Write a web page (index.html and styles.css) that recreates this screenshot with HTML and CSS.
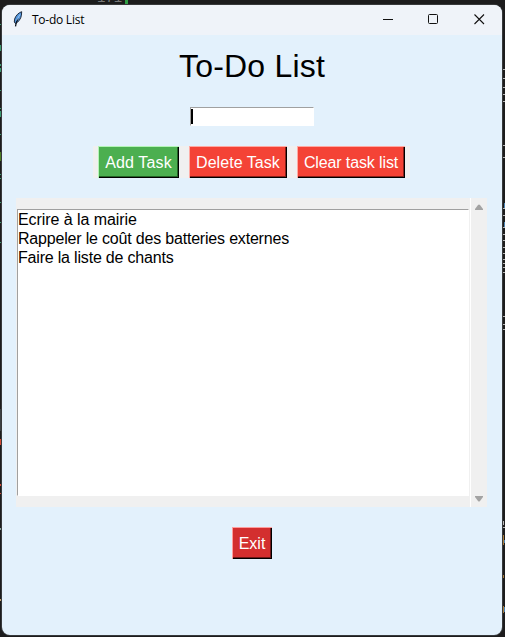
FILE: index.html
```html
<!DOCTYPE html>
<html lang="en">
<head>
<meta charset="utf-8">
<title>To-do List</title>
<link rel="stylesheet" href="styles.css">
</head>
<body>
<div class="editor-top"><span class="line-number">171</span><i class="change-bar"></i></div>
<svg class="editor-edges" width="505" height="637" shape-rendering="crispEdges" aria-hidden="true">
  <g fill="#3b9b72"><path d="M0 24h2v1H0zM0 45h1v6H0zM0 64h2v2H0zM0 68h2v4H0zM0 90h2v1H0zM0 108h2v1H0zM0 111h1v6H0zM0 134h2v1H0zM0 174h2v1H0zM0 178h2v1H0zM0 202h2v1H0zM0 222h2v1H0zM0 242h2v1H0z"/></g>
  <path fill="#4c7d24" d="M0 152h2v9H0z"/>
  <path fill="#3c4144" d="M0 409h2v22H0z"/>
  <path fill="#d64b35" d="M0 439h2v6H0zM0 484h2v2H0zM0 493h2v1H0z"/>
  <path fill="#8aa39c" d="M0 528h2v2H0z"/>
  <path fill="#c5a574" d="M0 599h2v2H0z"/>
  <g fill="#b8b8b8"><path d="M503 69h2v1h-2zM503 78h2v1h-2zM503 87h2v1h-2zM503 94h2v1h-2zM503 101h2v1h-2zM503 145h2v1h-2zM503 157h2v1h-2zM503 208h2v1h-2zM503 215h2v1h-2zM503 227h2v1h-2zM503 234h2v1h-2zM503 240h2v1h-2zM503 247h2v1h-2zM503 253h2v1h-2zM503 259h2v1h-2zM503 263h2v1h-2zM503 267h2v1h-2zM503 272h2v1h-2zM503 316h2v1h-2zM503 324h2v1h-2zM503 329h2v1h-2zM503 521h1v4h-1zM503 527h2v1h-2z"/></g>
  <path fill="#4c86b5" d="M504 203h1v5h-1zM504 222h1v5h-1zM504 540h1v3h-1zM504 607h1v5h-1z"/>
  <path fill="#a77b3a" d="M503 535h1v10h-1zM503 575h1v3h-1zM503 606h1v7h-1z"/>
</svg>
<main class="window">
  <header class="titlebar">
    <svg class="feather" width="10" height="16" viewBox="0 0 10 16" aria-hidden="true">
      <path d="M8.7.7C6 1.5 2.6 4.4 1.6 8.1L1.3 11l1.3 1.7C5.4 11 8 7.7 8.4 4.3z" fill="#4f91d9" stroke="#111b2b" stroke-width=".9"/>
      <path d="M5 7.5C3.7 10 3 11.500 2.500 15.4" fill="none" stroke="#0b1018" stroke-width="1.3"/>
      <path d="M7 3.4 3.6 9.400" stroke="#a7d1f6" stroke-width=".8"/>
    </svg>
    <span class="caption">To-do List</span>
    <svg class="controls" width="102" height="12" viewBox="0 0 102 12" fill="none" stroke="#111" aria-hidden="true">
      <path d="M0 6.5h10"/>
      <rect x="45.5" y="1.5" width="9" height="9" rx="1"/>
      <path d="m91.5 1.5 9.5 9.5m0-9.5-9.5 9.5" stroke-width="1.1"/>
    </svg>
  </header>
  <h1>To-Do List</h1>
  <div class="entry"><i class="caret"></i></div>
  <div class="actions">
    <button class="add">Add Task</button>
    <button class="delete">Delete Task</button>
    <button class="clear">Clear task list</button>
  </div>
  <section class="list-frame">
    <ul>
      <li>Ecrire à la mairie</li>
      <li>Rappeler le coût des batteries externes</li>
      <li>Faire la liste de chants</li>
    </ul>
    <div class="scrollbar">
      <svg width="8" height="6" viewBox="0 0 8 6"><path d="M0 6V5l3-4q1-1 2 0l3 4v1z" fill="#a3a3a3"/></svg>
      <svg width="8" height="6" viewBox="0 0 8 6"><path d="M0 0v1l3 4q1 1 2 0l3-4V0z" fill="#a3a3a3"/></svg>
    </div>
  </section>
  <button class="exit">Exit</button>
</main>
</body>
</html>
```
FILE: styles.css
```css
* { box-sizing: border-box; }
body {
  margin: 0;
  width: 505px;
  height: 637px;
  overflow: hidden;
  background: #1c1c1d;
  font: 16px "Liberation Sans", Arial, sans-serif;
  color: #000;
}
.editor-edges { position: absolute; left: 0; top: 0; }
.editor-top {
  display: flex;
  height: 5px;
  overflow: hidden;
  padding-left: 97px;
}
.line-number {
  width: 28px;
  margin-top: -10px;
  font: 14px/16px "Liberation Mono", monospace;
  color: #777;
}
.change-bar { width: 3px; height: 5px; background: #2f9e44; }
.window {
  position: relative;
  display: flex;
  flex-direction: column;
  align-items: center;
  width: 500px;
  height: 630px;
  margin-left: 2px;
  border-radius: 8px;
  overflow: hidden;
  background: #e3f1fc;
  box-shadow: 0 0 0 1px #37393b;
}
.titlebar {
  display: flex;
  align-items: center;
  width: 100%;
  height: 30px;
  flex: none;
  padding: 0 17px 0 11px;
  background: #eff3f9;
}
.feather { margin-top: -2px; }
.caption {
  margin-left: 9px;
  font: 12px/16px "Open Sans", sans-serif;
  letter-spacing: -.25px;
}
.controls { margin-left: auto; margin-top: -2px; }
h1 {
  margin: 13px 0 0;
  height: 37px;
  font-size: 32px;
  font-weight: 400;
  line-height: 37px;
  letter-spacing: .2px;
  white-space: nowrap;
}
.entry {
  width: 124px;
  height: 19px;
  margin-top: 22px;
  flex: none;
  border: 1px solid #fff;
  border-top-color: #a0a0a0;
  border-left-color: #a0a0a0;
  background: #fff;
  padding: 1px 0 0;
}
.caret { display: block; width: 2px; height: 15px; background: #000; }
.actions {
  display: flex;
  gap: 10px;
  width: 317px;
  height: 32px;
  margin: 20px 1px 0 0;
  padding: 0 5px;
  flex: none;
  background: #f0f0f0;
}
button {
  height: 32px;
  margin: 0;
  padding: 1px 0 0;
  border: 0;
  font: 16px/31px "Liberation Sans", Arial, sans-serif;
  color: #fff;
  white-space: nowrap;
}
.add { width: 81px; letter-spacing: .15px; background: #4caf50; box-shadow: inset 1px 1px #b4f5b6, inset -1px -1px #000, inset -2px -2px #236326; }
.delete, .clear { background: #f44336; box-shadow: inset 1px 1px #ffaaa3, inset -1px -1px #000, inset -2px -2px #8c211a; }
.delete { width: 98px; letter-spacing: .05px; }
.clear { width: 108px; letter-spacing: -.12px; }
.list-frame {
  display: flex;
  width: 471px;
  height: 309px;
  margin: 20px 0 0 -1px;
  padding-left: 1px;
  flex: none;
  background: #f0f0f0;
}
ul {
  width: 452px;
  height: 287px;
  margin: 11px 0 0;
  padding: 1px 0 0;
  list-style: none;
  border: 1px solid #fff;
  border-top-color: #a0a0a0;
  border-left-color: #a0a0a0;
  background: #fff;
}
li { height: 19px; line-height: 18px; letter-spacing: -.19px; white-space: nowrap; }
li:first-child { letter-spacing: -.06px; }
.scrollbar {
  display: flex;
  flex-direction: column;
  align-items: center;
  justify-content: space-between;
  width: 17px;
  margin-left: 1px;
  padding: 6px 0 5px;
  border-left: 1px solid #fff;
}
.exit {
  width: 40px;
  flex: none;
  margin-top: 20px;
  background: #d32f2f;
  box-shadow: inset 1px 1px #ff9d9d, inset -1px -1px #000, inset -2px -2px #701818;
}
```
